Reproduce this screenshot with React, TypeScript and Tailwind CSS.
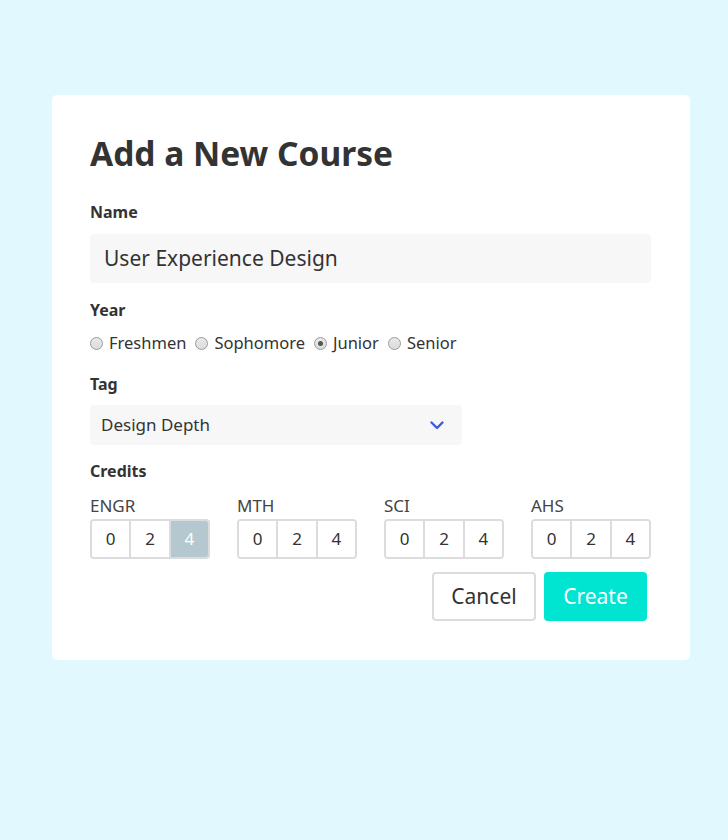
import React from "react";

const font = { fontFamily: "'Noto Sans', Lato, sans-serif" };

function Radio({ label, checked }: { label: string; checked?: boolean }) {
  return (
    <label className="flex items-center gap-[6px] mr-[9px]">
      <span className="w-[13px] h-[13px] rounded-full border border-[#9a9a9a] bg-gradient-to-b from-[#e9e9e9] to-[#dcdcdc] flex items-center justify-center">
        {checked && <span className="w-[5px] h-[5px] rounded-full bg-[#555]" />}
      </span>
      <span className="text-[16.5px] text-[#333]">{label}</span>
    </label>
  );
}

function CreditGroup({ label, selected }: { label: string; selected?: number }) {
  const vals = [0, 2, 4];
  return (
    <div className="w-[120px]">
      <div className="text-[17px] text-[#444] leading-[20px] mb-[3px]">{label}</div>
      <div className="flex h-[40px] border-2 border-[#dcdcdc] rounded-[4px] overflow-hidden">
        {vals.map((v, i) => (
          <div
            key={v}
            className={`flex-1 flex items-center justify-center text-[17px] ${i > 0 ? "border-l-2 border-[#dcdcdc]" : ""} ${selected === v ? "bg-[#b5c8cf] text-white" : "bg-white text-[#333]"}`}
          >
            {v}
          </div>
        ))}
      </div>
    </div>
  );
}

export default function App() {
  return (
    <div className="min-h-[840px] bg-[#e0f8fe] pt-[95px] pl-[52px]" style={font}>
      <div className="w-[638px] bg-white rounded-[5px] pl-[38px] pr-[39px] pt-[30px] pb-[39px] text-[#333]">
        <h1 className="text-[33.5px] font-bold leading-[56px] text-[#333]">Add a New Course</h1>
        <div className="mt-[21px] text-[16px] font-bold leading-[20px]">Name</div>
        <div className="mt-[12px] h-[49px] bg-[#f7f7f7] rounded-[4px] flex items-center px-[14px] text-[21px] text-[#333]">
          User Experience Design
        </div>
        <div className="mt-[17px] text-[16px] font-bold leading-[20px]">Year</div>
        <div className="mt-[13px] flex items-center h-[20px]">
          <Radio label="Freshmen" />
          <Radio label="Sophomore" />
          <Radio label="Junior" checked />
          <Radio label="Senior" />
        </div>
        <div className="mt-[21px] text-[16px] font-bold leading-[20px]">Tag</div>
        <div className="mt-[11px] w-[372px] h-[40px] bg-[#f7f7f7] rounded-[4px] flex items-center justify-between pl-[11px] pr-[18px] text-[17px] text-[#333]">
          <span>Design Depth</span>
          <svg width="14" height="9" viewBox="0 0 14 9" fill="none">
            <path d="M1.5 1.5 L7 7 L12.5 1.5" stroke="#3b5bdb" strokeWidth="2.4" strokeLinecap="round" strokeLinejoin="round" />
          </svg>
        </div>
        <div className="mt-[16px] text-[16px] font-bold leading-[20px]">Credits</div>
        <div className="mt-[15px] flex gap-[27px]">
          <CreditGroup label="ENGR" selected={4} />
          <CreditGroup label="MTH" />
          <CreditGroup label="SCI" />
          <CreditGroup label="AHS" />
        </div>
        <div className="mt-[13px] flex justify-end gap-[8px] pr-[4px]">
          <button className="w-[104px] h-[49px] border-2 border-[#dcdcdc] rounded-[4px] bg-white text-[21px] text-[#333]">Cancel</button>
          <button className="w-[103px] h-[49px] rounded-[4px] bg-[#00e5d2] text-[21px] text-white">Create</button>
        </div>
      </div>
    </div>
  );
}
